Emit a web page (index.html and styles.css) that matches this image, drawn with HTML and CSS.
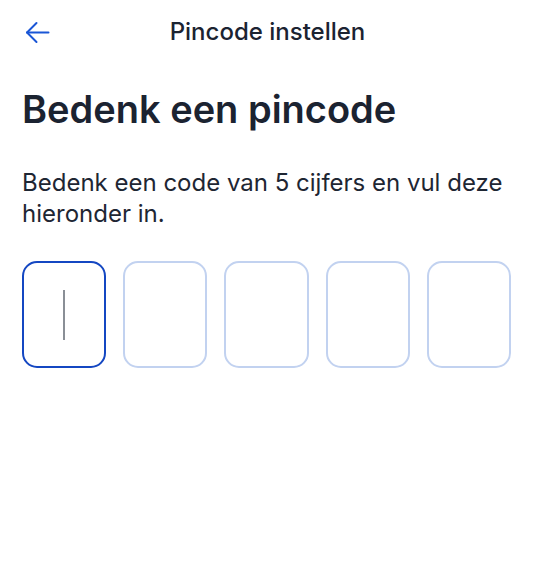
FILE: index.html
```html
<!DOCTYPE html>
<html lang="nl">
<head>
<meta charset="utf-8">
<link rel="stylesheet" href="styles.css">
</head>
<body>
<div class="screen">
  <header class="topbar">
    <button class="back" aria-label="Terug">
      <svg width="25" height="23" viewBox="0 0 25 23" fill="none" stroke="currentColor" stroke-width="2" stroke-linecap="round" stroke-linejoin="round">
        <path d="M23.5 11.5H2"/>
        <path d="M11.5 2L2 11.5L11.5 21"/>
      </svg>
    </button>
    <div class="title">Pincode instellen</div>
    <div class="spacer"></div>
  </header>
  <main class="content">
    <h1 class="heading">Bedenk een pincode</h1>
    <p class="desc">Bedenk een code van 5 cijfers en vul deze hieronder in.</p>
    <div class="pins">
      <div class="pin active"><span class="caret"></span></div>
      <div class="pin"></div>
      <div class="pin"></div>
      <div class="pin"></div>
      <div class="pin"></div>
    </div>
  </main>
</div>
</body>
</html>
```
FILE: styles.css
```css
* { box-sizing: border-box; }
html, body { margin: 0; padding: 0; background: #fff; }
body {
  font-family: Inter, "Noto Sans", sans-serif;
  color: #1b2331;
}
.screen { width: 535px; height: 576px; }
.topbar {
  display: grid;
  grid-template-columns: 70px 1fr 70px;
  align-items: center;
  height: 64px;
}
.back {
  border: 0;
  background: none;
  padding: 0 0 0 25px;
  color: #1a56d6;
  display: flex;
  align-items: center;
  height: 64px;
  cursor: pointer;
}
.title {
  text-align: center;
  font-size: 24px;
  font-weight: 500;
  line-height: 30px;
}
.content { padding: 0 24px 0 22px; }
.heading {
  margin: 22px 0 0;
  font-size: 38px;
  font-weight: 600;
  line-height: 46px;
}
.desc {
  margin: 35px 0 0;
  font-size: 24px;
  line-height: 31px;
  font-weight: 400;
  color: #1e2633;
}
.pins {
  display: flex;
  gap: 17px;
  margin-top: 32px;
}
.pin {
  flex: 1 1 0;
  height: 107px;
  border: 2.5px solid #c2d2f0;
  border-radius: 15px;
  display: flex;
  align-items: center;
  justify-content: center;
}
.pin.active { border-color: #1447c2; }
.caret {
  width: 2px;
  height: 50px;
  background: #8a8f96;
}
```
